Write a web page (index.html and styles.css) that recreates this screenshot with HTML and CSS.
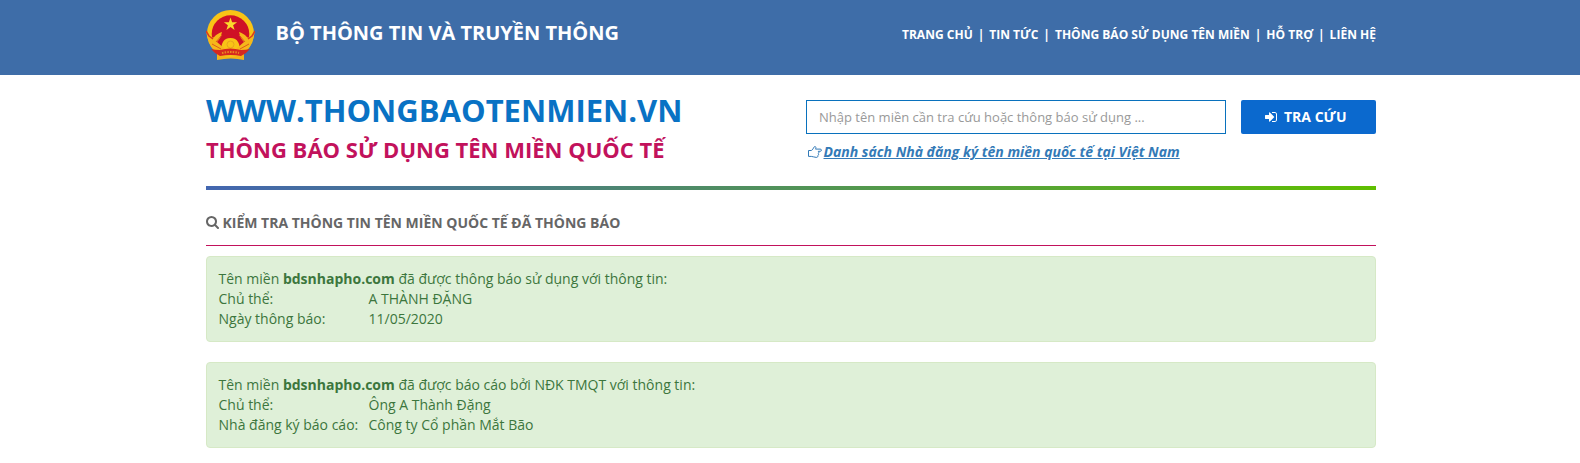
FILE: index.html
```html
<!DOCTYPE html>
<html lang="vi">
<head>
<meta charset="utf-8">
<title>Thông báo tên miền quốc tế</title>
<link rel="stylesheet" href="styles.css">
</head>
<body>
<header class="topbar">
  <div class="container topbar-inner">
    <svg class="emblem" viewBox="0 0 49 50">
      <path d="M11 36h27v14q-13-3-27 0z" fill="#f3b419"/>
      <circle cx="24.500" cy="23.500" r="23.500" fill="#f9c416"/>
      <circle cx="24.500" cy="24" r="18.800" fill="#cf1126"/>
      <path d="M24.500 7.500l1.600 4.700h5l-4 3 1.500 4.800-4.100-2.900-4.100 2.900 1.500-4.800-4-3h5z" fill="#fadc2c"/>
      <path d="M15 42c0-8 2-14 9.500-14S34 34 34 42z" fill="#f9c416"/>
      <path d="M0 21c4 7 7 8 9 5 2-2 4-3 7-4-1 5-3 8-5 10l8 7v5C10 45 3 38 0 21zM49 21c-4 7-7 8-9 5-2-2-4-3-7-4 1 5 3 8 5 10l-8 7v5c9 1 16-6 19-23z" fill="#f6b71a"/>
      <path d="M0 21l3 5 4 3M49 21l-3 5-4 3" stroke="#dd3a1d" stroke-width="1.500" fill="none"/>
      <circle cx="24.500" cy="34.500" r="3.500" fill="none" stroke="#e9a51d"/>
      <path d="M6 34l9 5M43 34l-9 5M10 32l6-7M39 32l-6-7" stroke="#dd5a1d" stroke-width="1" fill="none"/>
      <path d="M5 39q4 1 9 1 10-3 21 0 5 0 9-1l-4 4-5 3q-10-2-21 0l-5-3z" fill="#d6281f"/>
      <path d="M16 43q8-2 17 0" fill="none" stroke="#e98a20" stroke-width="2" stroke-dasharray="1.500 1.200"/>
    </svg>
    <div class="ministry">BỘ THÔNG TIN VÀ TRUYỀN THÔNG</div>
    <nav class="nav"><a>TRANG CHỦ</a><i>|</i><a>TIN TỨC</a><i>|</i><a>THÔNG BÁO SỬ DỤNG TÊN MIỀN</a><i>|</i><a>HỖ TRỢ</a><i>|</i><a>LIÊN HỆ</a></nav>
  </div>
</header>
<main class="container">
  <section class="hero">
    <div>
      <h1 class="site"><span>WWW.THONGBAOTENMIEN.VN</span></h1>
      <h2 class="tagline"><span>THÔNG BÁO SỬ DỤNG TÊN MIỀN QUỐC TẾ</span></h2>
    </div>
    <div class="lookup">
      <div class="search-row">
        <input class="domain" placeholder="Nhập tên miền cần tra cứu hoặc thông báo sử dụng ...">
        <button class="submit"><svg viewBox="128 256 1536 1280"><path d="M1312 896q0 26-19 45l-544 544q-19 19-45 19t-45-19-19-45v-288h-448q-26 0-45-19t-19-45v-384q0-26 19-45t45-19h448v-288q0-26 19-45t45-19 45 19l544 544q19 19 19 45zm352-352v704q0 119-84.500 203.500t-203.500 84.500h-320q-13 0-22.500-9.500t-9.500-22.500q0-4-1-20t-.500-26.500 3-23.500 10-19.500 20.500-6.500h320q66 0 113-47t47-113v-704q0-66-47-113t-113-47h-312l-11.500-1-11.500-3-8-5.500-7-9-2-13.500q0-4-1-20t-.500-26.500 3-23.500 10-19.500 20.500-6.500h320q119 0 203.500 84.500t84.500 203.500z" fill="currentColor"/></svg><span>TRA CỨU</span></button>
      </div>
      <div class="registrars"><svg viewBox="0 0 14 12"><path d="M.5 4.500h2.800C4.800 4 5.300 2 6.200.9c1.300-1.100 2.300.4 1.300 2.200h4.700c1.700 0 1.700 2.200 0 2.200h-2c1 .8.800 1.700 0 2.100.7.900.4 1.700-.3 2 .3 1.300-.4 2-1.700 2-2 0-3-1-4.900-1H.5z" fill="none" stroke="currentColor"/></svg><a>Danh sách Nhà đăng ký tên miền quốc tế tại Việt Nam</a></div>
    </div>
  </section>
  <div class="rule"></div>
  <h3 class="heading"><svg viewBox="64 128 1664 1664"><path d="M1216 832q0-185-131.500-316.500t-316.500-131.500-316.500 131.500-131.500 316.500 131.500 316.500 316.500 131.500 316.500-131.500 131.500-316.500zm512 832q0 52-38 90t-90 38q-54 0-90-38l-343-342q-179 124-399 124-143 0-273.500-55.500t-225-150-150-225-55.500-273.500 55.500-273.500 150-225 225-150 273.500-55.500 273.500 55.500 225 150 150 225 55.500 273.500q0 220-124 399l343 343q37 37 37 90z" fill="currentColor"/></svg><span>KIỂM TRA THÔNG TIN TÊN MIỀN QUỐC TẾ ĐÃ THÔNG BÁO</span></h3>
  <div class="alert">
    <p>Tên miền <b>bdsnhapho.com</b> đã được thông báo sử dụng với thông tin:</p>
    <dl><dt>Chủ thể:</dt><dd>A THÀNH ĐẶNG</dd><dt>Ngày thông báo:</dt><dd>11/05/2020</dd></dl>
  </div>
  <div class="alert">
    <p>Tên miền <b>bdsnhapho.com</b> đã được báo cáo bởi NĐK TMQT với thông tin:</p>
    <dl><dt>Chủ thể:</dt><dd>Ông A Thành Đặng</dd><dt>Nhà đăng ký báo cáo:</dt><dd>Công ty Cổ phần Mắt Bão</dd></dl>
  </div>
</main>
</body>
</html>
```
FILE: styles.css
```css
* { box-sizing: border-box; }
body { margin: 0; background: #fff; font: 14px/20px "Open Sans", sans-serif; overflow: hidden; }
h1, h2, h3, p, dl, dd { margin: 0; }
svg { display: block; flex: none; }
.container { width: 1170px; margin-left: 206px; }
.topbar { height: 75px; background: #3e6da8; color: #fff; }
.topbar-inner { display: flex; }
.emblem { width: 49px; height: 50px; margin-top: 10px; }
.ministry { margin: 18px 0 0 20.5px; font-size: 20px; line-height: 30px; font-weight: 700; white-space: nowrap; }
.nav { display: flex; margin: 25px 0 0 auto; font-size: 12px; font-weight: 700; letter-spacing: .02px; white-space: nowrap; }
.nav i { width: 16.5px; text-align: center; font-style: normal; }
.hero { display: flex; justify-content: space-between; height: 111px; }
.site { margin-top: 14px; font-size: 31px; line-height: 42px; font-weight: 700; color: #0972c4; white-space: nowrap; }
.tagline { margin-top: 2px; font-size: 22px; line-height: 32px; font-weight: 700; color: #c2125c; white-space: nowrap; }
.lookup { width: 570px; padding-top: 25px; }
.search-row { display: flex; gap: 15px; }
.domain { width: 420px; height: 34px; padding: 0 12px; border: 1px solid #0971bd; font: 13px "Open Sans", sans-serif; }
.domain::placeholder { color: #999; opacity: 1; }
.submit { display: flex; align-items: center; width: 135px; height: 34px; padding: 0 0 0 24px; gap: 7px; border: 0; border-radius: 2px; background: #0b69ce; color: #fff; font: 700 14px "Open Sans", sans-serif; white-space: nowrap; }
.submit svg { width: 12px; height: 10px; }
.submit span { margin-top: -1px; }
.registrars { display: flex; align-items: center; gap: 1.5px; margin: 8px 0 0 2px; color: #337ab7; white-space: nowrap; }
.registrars svg { width: 14px; height: 12px; }
.registrars a { font-weight: 700; font-style: italic; text-decoration: underline; }
.rule { height: 4px; background: linear-gradient(90deg, #4366b0, #5fbf00); }
.heading { display: flex; align-items: center; gap: 3.5px; height: 56px; padding-top: 10px; margin-bottom: 10px; border-bottom: 1px solid #c2125c; font-size: 14px; font-weight: 700; color: #666; white-space: nowrap; }
.heading svg { width: 13px; height: 13px; }
.alert { height: 86px; margin-bottom: 20px; padding: 12px 11.5px; border: 1px solid #d6e9c6; border-radius: 4px; background: #dff0d8; color: #3c763d; white-space: nowrap; }
.alert b { font-weight: 700; }
.alert dl { display: grid; grid-template-columns: 150px auto; }
```
